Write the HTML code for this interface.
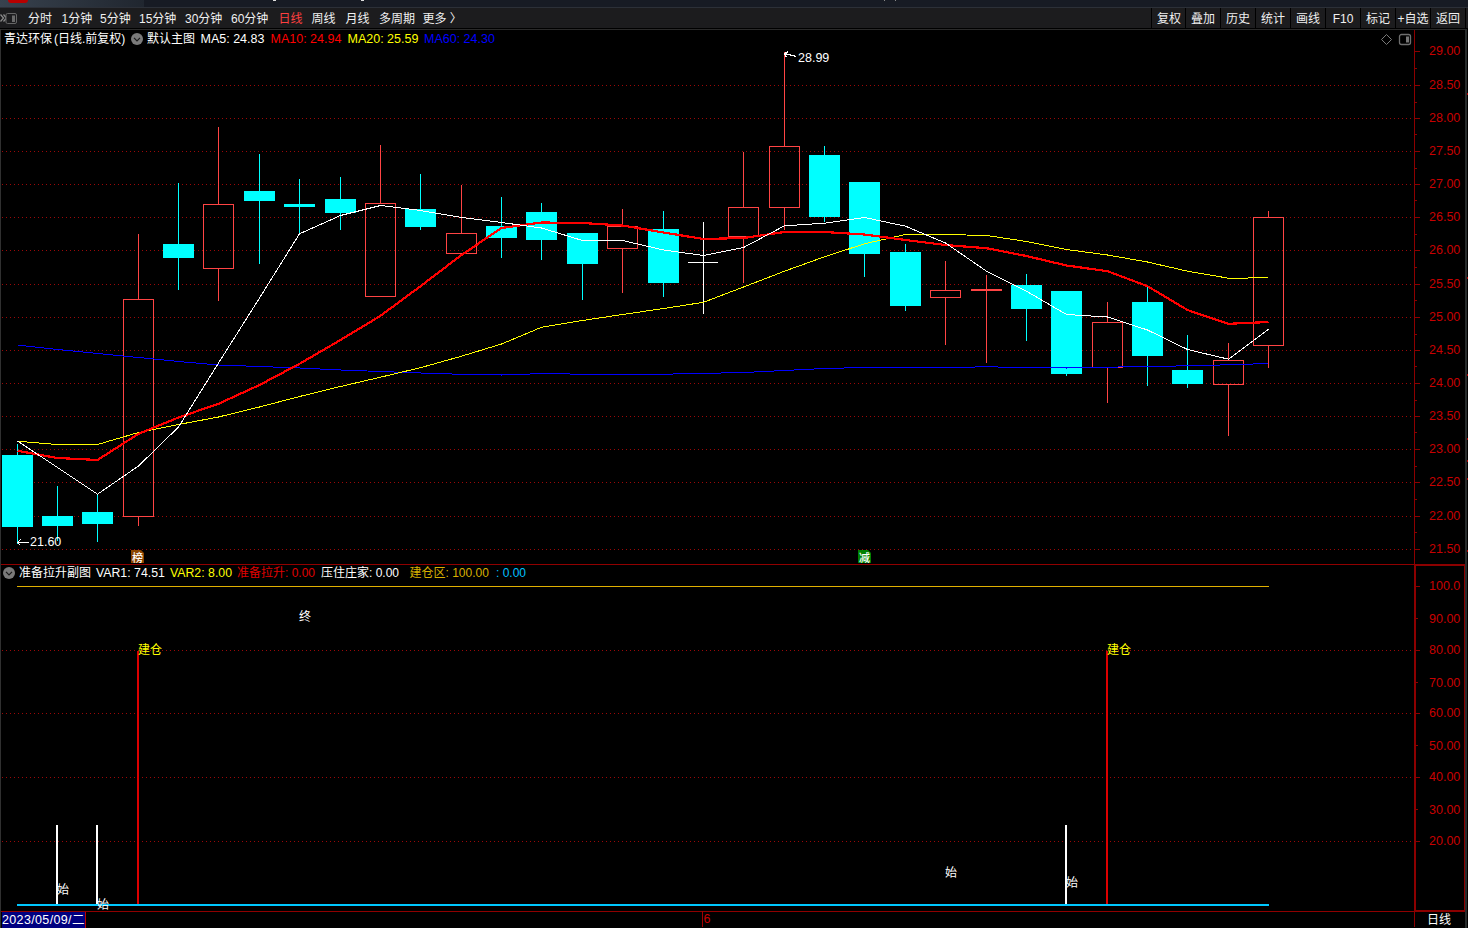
<!DOCTYPE html>
<html lang="zh-CN"><head><meta charset="utf-8"><title>青达环保 日线</title>
<style>
html,body{margin:0;padding:0;background:#000;}
body{width:1468px;height:928px;position:relative;overflow:hidden;
 font-family:"Liberation Sans","Noto Sans CJK SC",sans-serif;font-size:12px;color:#fff;}
.t{position:absolute;white-space:nowrap;line-height:14px;height:14px;}
#title{position:absolute;left:0;top:0;width:1468px;height:7px;background:#171b24;}
#title .g{position:absolute;left:0;top:0;width:144px;height:7px;background:linear-gradient(90deg,#38424e,#20262f);}
#title .r{position:absolute;left:8px;top:-4px;width:20px;height:7px;border-radius:3px;background:#b80000;}
#title .w{position:absolute;top:0;width:3px;height:1px;background:#ddd;}
#tl{position:absolute;left:0;top:7px;width:1468px;height:1px;background:#2c3038;}
#tb{position:absolute;left:0;top:8px;width:1468px;height:20px;background:#1c1c1e;}
.btn{position:absolute;top:0;height:20px;width:34px;border-left:1px solid #000;text-align:center;line-height:22px;color:#f0f0f0;}
.ax{position:absolute;left:1429px;width:34px;color:#c80000;font-size:12.5px;line-height:14px;height:14px;white-space:nowrap;}
</style></head><body>

<div id="title"><div class="g"></div><div class="r"></div><div class="w" style="left:273px"></div><div class="w" style="left:361px"></div><div class="w" style="left:884px;width:1px;background:#888"></div><div class="w" style="left:895px;width:1px;background:#888"></div></div>
<div id="tl"></div><div id="tb">
<div class="btn" style="left:1151px">复权</div>
<div class="btn" style="left:1185px">叠加</div>
<div class="btn" style="left:1220px">历史</div>
<div class="btn" style="left:1255px">统计</div>
<div class="btn" style="left:1290px">画线</div>
<div class="btn" style="left:1325px">F10</div>
<div class="btn" style="left:1360px">标记</div>
<div class="btn" style="left:1395px">+自选</div>
<div class="btn" style="left:1430px">返回</div>
<div style="position:absolute;left:1465px;top:0;width:1px;height:20px;background:#000"></div>
</div>
<svg width="1468" height="928" viewBox="0 0 1468 928" shape-rendering="crispEdges" style="position:absolute;left:0;top:0">
<line x1="2" y1="85.5" x2="1412" y2="85.5" stroke="#9c0808" stroke-width="1" stroke-dasharray="1 3"/>
<line x1="2" y1="118.5" x2="1412" y2="118.5" stroke="#9c0808" stroke-width="1" stroke-dasharray="1 3"/>
<line x1="2" y1="151.5" x2="1412" y2="151.5" stroke="#9c0808" stroke-width="1" stroke-dasharray="1 3"/>
<line x1="2" y1="184.5" x2="1412" y2="184.5" stroke="#9c0808" stroke-width="1" stroke-dasharray="1 3"/>
<line x1="2" y1="217.5" x2="1412" y2="217.5" stroke="#9c0808" stroke-width="1" stroke-dasharray="1 3"/>
<line x1="2" y1="250.5" x2="1412" y2="250.5" stroke="#9c0808" stroke-width="1" stroke-dasharray="1 3"/>
<line x1="2" y1="284.5" x2="1412" y2="284.5" stroke="#9c0808" stroke-width="1" stroke-dasharray="1 3"/>
<line x1="2" y1="317.5" x2="1412" y2="317.5" stroke="#9c0808" stroke-width="1" stroke-dasharray="1 3"/>
<line x1="2" y1="350.5" x2="1412" y2="350.5" stroke="#9c0808" stroke-width="1" stroke-dasharray="1 3"/>
<line x1="2" y1="383.5" x2="1412" y2="383.5" stroke="#9c0808" stroke-width="1" stroke-dasharray="1 3"/>
<line x1="2" y1="416.5" x2="1412" y2="416.5" stroke="#9c0808" stroke-width="1" stroke-dasharray="1 3"/>
<line x1="2" y1="449.5" x2="1412" y2="449.5" stroke="#9c0808" stroke-width="1" stroke-dasharray="1 3"/>
<line x1="2" y1="482.5" x2="1412" y2="482.5" stroke="#9c0808" stroke-width="1" stroke-dasharray="1 3"/>
<line x1="2" y1="516.5" x2="1412" y2="516.5" stroke="#9c0808" stroke-width="1" stroke-dasharray="1 3"/>
<line x1="2" y1="549.5" x2="1412" y2="549.5" stroke="#9c0808" stroke-width="1" stroke-dasharray="1 3"/>
<line x1="2" y1="650.5" x2="1412" y2="650.5" stroke="#9c0808" stroke-width="1" stroke-dasharray="1 3"/>
<line x1="2" y1="713.5" x2="1412" y2="713.5" stroke="#9c0808" stroke-width="1" stroke-dasharray="1 3"/>
<line x1="2" y1="777.5" x2="1412" y2="777.5" stroke="#9c0808" stroke-width="1" stroke-dasharray="1 3"/>
<line x1="2" y1="841.5" x2="1412" y2="841.5" stroke="#9c0808" stroke-width="1" stroke-dasharray="1 3"/>
<rect x="0" y="29" width="1466" height="1" fill="#2a2a2a"/>
<rect x="0" y="29" width="1" height="899" fill="#303030"/>
<rect x="1465" y="29" width="2" height="899" fill="#282c2c"/>
<rect x="1" y="564" width="1464" height="1" fill="#900000"/>
<rect x="1" y="911" width="1464" height="1" fill="#900000"/>
<rect x="702" y="911" width="1" height="16" fill="#a00000"/>
<rect x="1414" y="30" width="1" height="535" fill="#8c0000"/>
<rect x="1414" y="565" width="2" height="347" fill="#8c0000"/>
<rect x="1414" y="564" width="51" height="2" fill="#8c0000"/>
<rect x="1464" y="565" width="1" height="347" fill="#8c0000"/>
<rect x="1414" y="910" width="51" height="2" fill="#8c0000"/>
<rect x="1414" y="912" width="1" height="15" fill="#8c0000"/>
<rect x="1415" y="51" width="5" height="1" fill="#8c0000"/>
<rect x="1415" y="68" width="2" height="1" fill="#8c0000"/>
<rect x="1415" y="85" width="5" height="1" fill="#8c0000"/>
<rect x="1415" y="102" width="2" height="1" fill="#8c0000"/>
<rect x="1415" y="118" width="5" height="1" fill="#8c0000"/>
<rect x="1415" y="134" width="2" height="1" fill="#8c0000"/>
<rect x="1415" y="151" width="5" height="1" fill="#8c0000"/>
<rect x="1415" y="168" width="2" height="1" fill="#8c0000"/>
<rect x="1415" y="184" width="5" height="1" fill="#8c0000"/>
<rect x="1415" y="200" width="2" height="1" fill="#8c0000"/>
<rect x="1415" y="217" width="5" height="1" fill="#8c0000"/>
<rect x="1415" y="234" width="2" height="1" fill="#8c0000"/>
<rect x="1415" y="250" width="5" height="1" fill="#8c0000"/>
<rect x="1415" y="267" width="2" height="1" fill="#8c0000"/>
<rect x="1415" y="284" width="5" height="1" fill="#8c0000"/>
<rect x="1415" y="300" width="2" height="1" fill="#8c0000"/>
<rect x="1415" y="317" width="5" height="1" fill="#8c0000"/>
<rect x="1415" y="334" width="2" height="1" fill="#8c0000"/>
<rect x="1415" y="350" width="5" height="1" fill="#8c0000"/>
<rect x="1415" y="366" width="2" height="1" fill="#8c0000"/>
<rect x="1415" y="383" width="5" height="1" fill="#8c0000"/>
<rect x="1415" y="400" width="2" height="1" fill="#8c0000"/>
<rect x="1415" y="416" width="5" height="1" fill="#8c0000"/>
<rect x="1415" y="432" width="2" height="1" fill="#8c0000"/>
<rect x="1415" y="449" width="5" height="1" fill="#8c0000"/>
<rect x="1415" y="466" width="2" height="1" fill="#8c0000"/>
<rect x="1415" y="482" width="5" height="1" fill="#8c0000"/>
<rect x="1415" y="499" width="2" height="1" fill="#8c0000"/>
<rect x="1415" y="516" width="5" height="1" fill="#8c0000"/>
<rect x="1415" y="532" width="2" height="1" fill="#8c0000"/>
<rect x="1415" y="549" width="5" height="1" fill="#8c0000"/>
<rect x="1416" y="586" width="4" height="1" fill="#8c0000"/>
<rect x="1416" y="618" width="2" height="1" fill="#8c0000"/>
<rect x="1416" y="650" width="4" height="1" fill="#8c0000"/>
<rect x="1416" y="682" width="2" height="1" fill="#8c0000"/>
<rect x="1416" y="713" width="4" height="1" fill="#8c0000"/>
<rect x="1416" y="745" width="2" height="1" fill="#8c0000"/>
<rect x="1416" y="777" width="4" height="1" fill="#8c0000"/>
<rect x="1416" y="809" width="2" height="1" fill="#8c0000"/>
<rect x="1416" y="841" width="4" height="1" fill="#8c0000"/>
<rect x="1467" y="93" width="1" height="2" fill="#b00000"/>
<rect x="1467" y="277" width="1" height="2" fill="#b00000"/>
<rect x="1467" y="374" width="1" height="2" fill="#b00000"/>
<rect x="1467" y="438" width="1" height="2" fill="#b00000"/>
<rect x="1467" y="460" width="1" height="2" fill="#b00000"/>
<rect x="1467" y="478" width="1" height="2" fill="#b00000"/>
<rect x="1467" y="550" width="1" height="2" fill="#b00000"/>
<rect x="17" y="444" width="1" height="100" fill="#00ffff"/>
<rect x="2" y="455" width="31" height="72" fill="#00ffff"/>
<rect x="57" y="486" width="1" height="55" fill="#00ffff"/>
<rect x="42" y="516" width="31" height="10" fill="#00ffff"/>
<rect x="97" y="494" width="1" height="48" fill="#00ffff"/>
<rect x="82" y="512" width="31" height="12" fill="#00ffff"/>
<rect x="138" y="234" width="1" height="65" fill="#ff4444"/>
<rect x="138" y="517" width="1" height="9" fill="#ff4444"/>
<rect x="123.5" y="299.5" width="30" height="217" fill="none" stroke="#ff4444" stroke-width="1"/>
<rect x="178" y="183" width="1" height="107" fill="#00ffff"/>
<rect x="163" y="244" width="31" height="14" fill="#00ffff"/>
<rect x="218" y="127" width="1" height="77" fill="#ff4444"/>
<rect x="218" y="269" width="1" height="32" fill="#ff4444"/>
<rect x="203.5" y="204.5" width="30" height="64" fill="none" stroke="#ff4444" stroke-width="1"/>
<rect x="259" y="154" width="1" height="110" fill="#00ffff"/>
<rect x="244" y="191" width="31" height="10" fill="#00ffff"/>
<rect x="299" y="179" width="1" height="54" fill="#00ffff"/>
<rect x="284" y="204" width="31" height="3" fill="#00ffff"/>
<rect x="340" y="177" width="1" height="53" fill="#00ffff"/>
<rect x="325" y="199" width="31" height="14" fill="#00ffff"/>
<rect x="380" y="145" width="1" height="58" fill="#ff4444"/>
<rect x="365.5" y="203.5" width="30" height="93" fill="none" stroke="#ff4444" stroke-width="1"/>
<rect x="420" y="174" width="1" height="56" fill="#00ffff"/>
<rect x="405" y="209" width="31" height="18" fill="#00ffff"/>
<rect x="461" y="185" width="1" height="48" fill="#ff4444"/>
<rect x="446.5" y="233.5" width="30" height="20" fill="none" stroke="#ff4444" stroke-width="1"/>
<rect x="501" y="197" width="1" height="61" fill="#00ffff"/>
<rect x="486" y="226" width="31" height="12" fill="#00ffff"/>
<rect x="541" y="203" width="1" height="57" fill="#00ffff"/>
<rect x="526" y="212" width="31" height="28" fill="#00ffff"/>
<rect x="582" y="233" width="1" height="67" fill="#00ffff"/>
<rect x="567" y="233" width="31" height="31" fill="#00ffff"/>
<rect x="622" y="209" width="1" height="17" fill="#ff4444"/>
<rect x="622" y="249" width="1" height="44" fill="#ff4444"/>
<rect x="607.5" y="226.5" width="30" height="22" fill="none" stroke="#ff4444" stroke-width="1"/>
<rect x="663" y="211" width="1" height="86" fill="#00ffff"/>
<rect x="648" y="229" width="31" height="54" fill="#00ffff"/>
<rect x="703" y="222" width="1" height="92" fill="#ffffff"/>
<rect x="688" y="262" width="30" height="1" fill="#ffffff"/>
<rect x="743" y="152" width="1" height="55" fill="#ff4444"/>
<rect x="743" y="237" width="1" height="46" fill="#ff4444"/>
<rect x="728.5" y="207.5" width="30" height="29" fill="none" stroke="#ff4444" stroke-width="1"/>
<rect x="784" y="52" width="1" height="94" fill="#ff4444"/>
<rect x="784" y="208" width="1" height="22" fill="#ff4444"/>
<rect x="769.5" y="146.5" width="30" height="61" fill="none" stroke="#ff4444" stroke-width="1"/>
<rect x="824" y="146" width="1" height="76" fill="#00ffff"/>
<rect x="809" y="155" width="31" height="62" fill="#00ffff"/>
<rect x="864" y="182" width="1" height="95" fill="#00ffff"/>
<rect x="849" y="182" width="31" height="72" fill="#00ffff"/>
<rect x="905" y="244" width="1" height="67" fill="#00ffff"/>
<rect x="890" y="252" width="31" height="54" fill="#00ffff"/>
<rect x="945" y="261" width="1" height="29" fill="#ff4444"/>
<rect x="945" y="298" width="1" height="47" fill="#ff4444"/>
<rect x="930.5" y="290.5" width="30" height="7" fill="none" stroke="#ff4444" stroke-width="1"/>
<rect x="986" y="275" width="1" height="88" fill="#ff4444"/>
<rect x="971" y="289" width="31" height="2" fill="#ff4444"/>
<rect x="1026" y="274" width="1" height="67" fill="#00ffff"/>
<rect x="1011" y="285" width="31" height="24" fill="#00ffff"/>
<rect x="1066" y="291" width="1" height="85" fill="#00ffff"/>
<rect x="1051" y="291" width="31" height="83" fill="#00ffff"/>
<rect x="1107" y="302" width="1" height="20" fill="#ff4444"/>
<rect x="1107" y="368" width="1" height="35" fill="#ff4444"/>
<rect x="1092.5" y="322.5" width="30" height="45" fill="none" stroke="#ff4444" stroke-width="1"/>
<rect x="1147" y="285" width="1" height="101" fill="#00ffff"/>
<rect x="1132" y="302" width="31" height="54" fill="#00ffff"/>
<rect x="1187" y="335" width="1" height="53" fill="#00ffff"/>
<rect x="1172" y="370" width="31" height="14" fill="#00ffff"/>
<rect x="1228" y="343" width="1" height="17" fill="#ff4444"/>
<rect x="1228" y="385" width="1" height="51" fill="#ff4444"/>
<rect x="1213.5" y="360.5" width="30" height="24" fill="none" stroke="#ff4444" stroke-width="1"/>
<rect x="1268" y="211" width="1" height="6" fill="#ff4444"/>
<rect x="1268" y="346" width="1" height="22" fill="#ff4444"/>
<rect x="1253.5" y="217.5" width="30" height="128" fill="none" stroke="#ff4444" stroke-width="1"/>
<polyline points="17.5,345.0 57.5,349.5 97.5,353.5 138.5,357.5 178.5,361.5 218.5,365.0 259.5,366.5 299.5,368.0 340.5,370.0 380.5,371.5 420.5,373.0 461.5,374.3 501.5,375.0 541.5,373.6 582.5,374.2 622.5,374.2 663.5,374.2 703.5,373.4 743.5,372.5 784.5,370.5 824.5,368.5 864.5,367.5 905.5,367.5 945.5,367.5 986.5,366.8 1026.5,367.5 1066.5,368.0 1107.5,367.2 1147.5,366.5 1187.5,365.8 1228.5,364.8 1268.5,363.5" fill="none" stroke="#0000ff" stroke-width="1"/>
<polyline points="17.5,441.2 57.5,444.5 97.5,444.5 138.5,432.5 178.5,424.5 218.5,417.0 259.5,407.0 299.5,396.5 340.5,386.5 380.5,377.2 420.5,367.7 461.5,356.2 501.5,344.0 541.5,327.3 582.5,320.5 622.5,314.5 663.5,308.5 703.5,302.3 743.5,287.0 784.5,271.2 824.5,256.8 864.5,243.8 905.5,234.5 945.5,234.5 986.5,235.5 1026.5,241.5 1066.5,249.5 1107.5,255.0 1147.5,262.0 1187.5,271.2 1228.5,278.2 1268.5,277.8" fill="none" stroke="#ffff00" stroke-width="1"/>
<polyline points="17.5,450.8 57.5,458.0 97.5,460.0 138.5,433.8 178.5,417.5 218.5,403.8 259.5,385.0 299.5,363.8 340.5,340.0 380.5,315.8 420.5,286.2 461.5,255.0 501.5,228.0 541.5,222.5 582.5,223.0 622.5,225.5 663.5,232.5 703.5,239.0 743.5,238.0 784.5,232.0 824.5,232.0 864.5,234.5 905.5,240.0 945.5,245.0 986.5,248.2 1026.5,256.0 1066.5,265.5 1107.5,271.2 1147.5,286.2 1187.5,310.0 1228.5,323.8 1268.5,322.0" fill="none" stroke="#ff0000" stroke-width="2.2"/>
<polyline points="17.5,441.0 57.5,467.5 97.5,494.2 138.5,466.0 178.5,427.0 218.5,363.0 259.5,298.0 299.5,233.8 340.5,215.5 380.5,205.5 420.5,210.5 461.5,217.5 501.5,222.5 541.5,228.0 582.5,240.5 622.5,240.5 663.5,250.0 703.5,255.5 743.5,247.5 784.5,225.8 824.5,223.2 864.5,217.5 905.5,226.2 945.5,243.0 986.5,271.2 1026.5,291.2 1066.5,314.5 1107.5,317.0 1147.5,330.0 1187.5,349.5 1228.5,359.2 1268.5,329.2" fill="none" stroke="#ffffff" stroke-width="1"/>
<path d="M796.5,56.5 L784.5,53.5 M784.5,53.5 l4,-2 M784.5,53.5 l2,4" stroke="#ffffff" stroke-width="1" fill="none"/>
<path d="M29,542.5 L17.5,542.5 M17.5,542.5 l3,-3 M17.5,542.5 l3,3" stroke="#ffffff" stroke-width="1" fill="none"/>
<rect x="17" y="586" width="1252" height="1" fill="#e0b000"/>
<rect x="17" y="904" width="1252" height="2" fill="#00c8ff"/>
<rect x="56" y="825" width="2" height="79" fill="#ffffff"/>
<rect x="96" y="825" width="2" height="79" fill="#ffffff"/>
<rect x="1065" y="825" width="2" height="79" fill="#ffffff"/>
<rect x="137" y="651" width="2" height="253" fill="#dc0000"/>
<rect x="1106" y="651" width="2" height="253" fill="#dc0000"/>
</svg>
<div class="t" style="left:28px;top:12px;color:#f0f0f0">分时</div>
<div class="t" style="left:61.5px;top:12px;color:#f0f0f0">1分钟</div>
<div class="t" style="left:100px;top:12px;color:#f0f0f0">5分钟</div>
<div class="t" style="left:139px;top:12px;color:#f0f0f0">15分钟</div>
<div class="t" style="left:185px;top:12px;color:#f0f0f0">30分钟</div>
<div class="t" style="left:231px;top:12px;color:#f0f0f0">60分钟</div>
<div class="t" style="left:278.5px;top:12px;color:#ff4040">日线</div>
<div class="t" style="left:311.5px;top:12px;color:#f0f0f0">周线</div>
<div class="t" style="left:345.5px;top:12px;color:#f0f0f0">月线</div>
<div class="t" style="left:379px;top:12px;color:#f0f0f0">多周期</div>
<div class="t" style="left:422.5px;top:12px;color:#f0f0f0">更多 〉</div>
<svg style="position:absolute;left:0;top:8px" width="20" height="20" viewBox="0 0 20 20"><path d="M0.5,6.5 l3,3.5 l-3,3.5 M3.5,6.5 l3,3.5 l-3,3.5" stroke="#8a8a8a" stroke-width="1.3" fill="none"/><rect x="6" y="5.5" width="10.5" height="10" rx="1.5" fill="#1c1c1e" stroke="#666" stroke-width="1"/><rect x="12" y="7.5" width="3" height="6.5" fill="#6a6a6a"/></svg>
<div class="t" style="left:4px;top:32px">青达环保<span style="margin-left:2px">(</span>日线.前复权)</div>
<svg style="position:absolute;left:131px;top:33px" width="12" height="12" viewBox="0 0 12 12"><circle cx="6" cy="6" r="6" fill="#7a7a7a"/><path d="M3,4.8 L6,7.8 L9,4.8" stroke="#1a1a1a" stroke-width="1.2" fill="none"/></svg>
<div class="t" style="left:147px;top:32px">默认主图</div>
<div class="t" style="left:200.5px;top:32px;font-size:12.5px">MA5: 24.83</div>
<div class="t" style="left:270.5px;top:32px;font-size:12.5px;color:#ff0000">MA10: 24.94</div>
<div class="t" style="left:347.5px;top:32px;font-size:12.5px;color:#ffff00">MA20: 25.59</div>
<div class="t" style="left:424px;top:32px;font-size:12.5px;color:#0000ff">MA60: 24.30</div>
<svg style="position:absolute;left:1380px;top:33px" width="34" height="14" viewBox="0 0 34 14"><path d="M6.5,1.5 L11.5,6.5 L6.5,11.5 L1.5,6.5 Z" stroke="#7a7a7a" stroke-width="1" fill="none"/><rect x="19.5" y="1.5" width="11" height="10" rx="2" stroke="#6e6e6e" stroke-width="1.3" fill="none"/><rect x="26" y="3.5" width="3" height="6" fill="#777"/></svg>
<div class="t" style="left:798px;top:51px;font-size:12.5px">28.99</div>
<div class="t" style="left:30px;top:535px;font-size:12.5px">21.60</div>
<div class="t" style="left:131px;top:550px;width:13px;height:13px;line-height:16px;background:#8b4500;text-align:center;overflow:hidden;font-size:11px;font-weight:500;clip-path:polygon(0 0,10px 0,13px 3px,13px 13px,0 13px)">榜</div>
<div class="t" style="left:858px;top:550px;width:13px;height:13px;line-height:16px;background:#008000;text-align:center;overflow:hidden;font-size:11px;font-weight:500;clip-path:polygon(0 0,10px 0,13px 3px,13px 13px,0 13px)">减</div>
<div class="ax" style="top:44px">29.00</div>
<div class="ax" style="top:78px">28.50</div>
<div class="ax" style="top:111px">28.00</div>
<div class="ax" style="top:144px">27.50</div>
<div class="ax" style="top:177px">27.00</div>
<div class="ax" style="top:210px">26.50</div>
<div class="ax" style="top:243px">26.00</div>
<div class="ax" style="top:277px">25.50</div>
<div class="ax" style="top:310px">25.00</div>
<div class="ax" style="top:343px">24.50</div>
<div class="ax" style="top:376px">24.00</div>
<div class="ax" style="top:409px">23.50</div>
<div class="ax" style="top:442px">23.00</div>
<div class="ax" style="top:475px">22.50</div>
<div class="ax" style="top:509px">22.00</div>
<div class="ax" style="top:542px">21.50</div>
<div class="ax" style="top:579px">100.0</div>
<div class="ax" style="top:612px">90.00</div>
<div class="ax" style="top:643px">80.00</div>
<div class="ax" style="top:676px">70.00</div>
<div class="ax" style="top:706px">60.00</div>
<div class="ax" style="top:739px">50.00</div>
<div class="ax" style="top:770px">40.00</div>
<div class="ax" style="top:803px">30.00</div>
<div class="ax" style="top:834px">20.00</div>
<svg style="position:absolute;left:3px;top:567px" width="12" height="12" viewBox="0 0 12 12"><circle cx="6" cy="6" r="6" fill="#7a7a7a"/><path d="M3,4.8 L6,7.8 L9,4.8" stroke="#1a1a1a" stroke-width="1.2" fill="none"/></svg>
<div class="t" style="left:19px;top:566px">准备拉升副图</div>
<div class="t" style="left:96px;top:566px;font-size:12.3px">VAR1: 74.51</div>
<div class="t" style="left:170px;top:566px;font-size:12.3px;color:#ffff00">VAR2: 8.00</div>
<div class="t" style="left:237px;top:566px;color:#e00000">准备拉升: 0.00</div>
<div class="t" style="left:321px;top:566px">压住庄家: 0.00</div>
<div class="t" style="left:409.5px;top:566px;color:#d8b000">建仓区: 100.00</div>
<div class="t" style="left:496px;top:566px;color:#00c0ff">: 0.00</div>
<div class="t" style="left:299px;top:610px">终</div>
<div class="t" style="left:138px;top:643px;color:#ffff00">建仓</div>
<div class="t" style="left:1107px;top:643px;color:#ffff00">建仓</div>
<div class="t" style="left:57px;top:883px">始</div>
<div class="t" style="left:97px;top:898px">始</div>
<div class="t" style="left:945px;top:866px">始</div>
<div class="t" style="left:1066px;top:876px">始</div>
<div class="t" style="left:2px;top:912px;width:83px;height:16px;line-height:16px;background:#000080;border-right:1px solid #c00000;font-size:12.5px;letter-spacing:0.35px">2023/05/09/二</div>
<div class="t" style="left:703.5px;top:912px;color:#c80000;font-size:12.5px">6</div>
<div class="t" style="left:1427px;top:913px">日线</div>
</body></html>
